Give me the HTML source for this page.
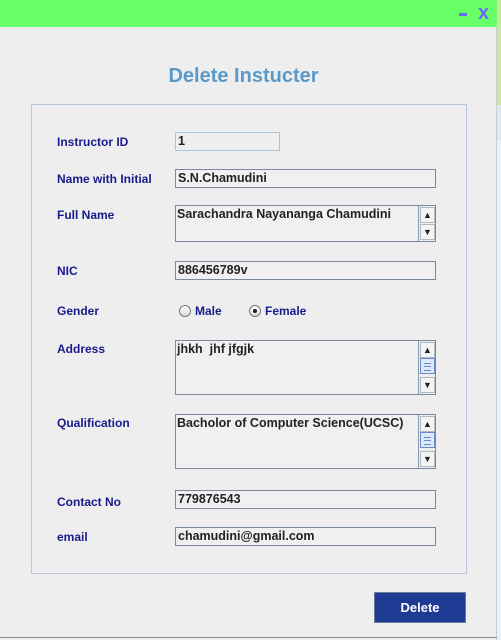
<!DOCTYPE html>
<html><head><style>
*{margin:0;padding:0;box-sizing:border-box}
body{width:501px;height:640px;background:#eeeeee;position:relative;overflow:hidden;font-family:"Liberation Sans",Arial,sans-serif;font-weight:bold;font-size:12px}
.bar{position:absolute;left:0;top:0;width:497px;height:27px;background:#66ff66}
.strip{position:absolute;left:497px;top:0;width:4px;height:640px;background:#e8f0f8}
.lbl{position:absolute;left:57px;color:#1a1a8c;font-size:12px}
.f{position:absolute;left:175px;width:261px;height:19px;border:1px solid #7a8a9a;border-right-color:#fff;border-bottom-color:#fff;background:#f0f0f0;padding:1px 2px;color:#222;font-size:12.5px;outline:1px solid #7a8a9a;outline-offset:-1px}
.ta{position:absolute;left:175px;width:261px;border:1px solid #7a8a9a;background:#f0f0f0;color:#222;padding:1px 1px;font-size:12.5px}
.sb{position:absolute;right:0;top:0;bottom:0;width:17px;background:#eee;border-left:1px solid #8a9aaa}
.ab{position:absolute;left:1px;width:15px;height:16px;background:#f4f4f4;border:1px solid #b0b8c0;font-size:9px;text-align:center;line-height:14px;color:#222}
.th{position:absolute;left:1px;width:15px;height:16px;background:#dde8f8;border:1px solid #6a8acc}
.th:before{content:"";position:absolute;left:3px;right:3px;top:4px;height:6px;border-top:1px solid #6a8acc;border-bottom:1px solid #6a8acc}
.th:after{content:"";position:absolute;left:3px;right:3px;top:7px;border-top:1px solid #6a8acc}
.rad{display:inline-block;width:12px;height:12px;border-radius:50%;border:1px solid #777;background:linear-gradient(#fff,#ddd);vertical-align:-2px;margin-right:4px;position:relative}
</style></head><body>
<div class="bar"></div>
<div style="position:absolute;left:459px;top:13px;width:8px;height:3px;background:#6a6aff"></div>
<div style="position:absolute;left:478px;top:2px;color:#6a6aff;font-size:20px;font-weight:bold">x</div>
<div class="strip"><div style="height:105px;background:#c8e8a0"></div><div style="height:35px;background:#dde8f0"></div></div>
<div style="position:absolute;left:0;top:27px;width:497px;height:613px;border-right:1px solid #ccc"></div>
<div style="position:absolute;left:0;width:487px;top:65px;text-align:center;color:#5a9ac8;font-size:20px;font-weight:bold">Delete Instucter</div>
<div style="position:absolute;left:31px;top:104px;width:436px;height:470px;border:1px solid #b8c8d8"></div>

<div class="lbl" style="top:135px">Instructor ID</div>
<div class="f" style="top:132px;width:105px;outline:none;border:1px solid #a8c4e0;background:#eee">1</div>
<div class="lbl" style="top:172px">Name with Initial</div>
<div class="f" style="top:169px">S.N.Chamudini</div>
<div class="lbl" style="top:208px">Full Name</div>
<div class="ta" style="top:205px;height:37px">Sarachandra Nayananga Chamudini<div class="sb"><div class="ab" style="top:1px">▲</div><div class="ab" style="bottom:1px">▼</div></div></div>
<div class="lbl" style="top:264px">NIC</div>
<div class="f" style="top:261px">886456789v</div>
<div class="lbl" style="top:304px">Gender</div>
<div style="position:absolute;left:179px;top:304px;color:#1a1a8c"><span class="rad"></span>Male</div>
<div style="position:absolute;left:249px;top:304px;color:#1a1a8c"><span class="rad"><span style="position:absolute;left:3px;top:3px;width:4px;height:4px;border-radius:50%;background:#222"></span></span>Female</div>
<div class="lbl" style="top:342px">Address</div>
<div class="ta" style="top:340px;height:55px">jhkh&nbsp; jhf jfgjk<div class="sb"><div class="ab" style="top:1px">▲</div><div class="th" style="top:17px"></div><div class="ab" style="bottom:1px">▼</div></div></div>
<div class="lbl" style="top:416px">Qualification</div>
<div class="ta" style="top:414px;height:55px">Bacholor of Computer Science(UCSC)<div class="sb"><div class="ab" style="top:1px">▲</div><div class="th" style="top:17px"></div><div class="ab" style="bottom:1px">▼</div></div></div>
<div class="lbl" style="top:495px">Contact No</div>
<div class="f" style="top:490px">779876543</div>
<div class="lbl" style="top:530px">email</div>
<div class="f" style="top:527px">chamudini@gmail.com</div>
<div style="position:absolute;left:374px;top:592px;width:92px;height:31px;background:#1f3a93;border:1px solid #6a7a9a;color:#fff;font-size:13px;text-align:center;line-height:29px">Delete</div>
<div style="position:absolute;left:0;top:637px;width:497px;height:1px;background:#888"></div>
</body></html>
